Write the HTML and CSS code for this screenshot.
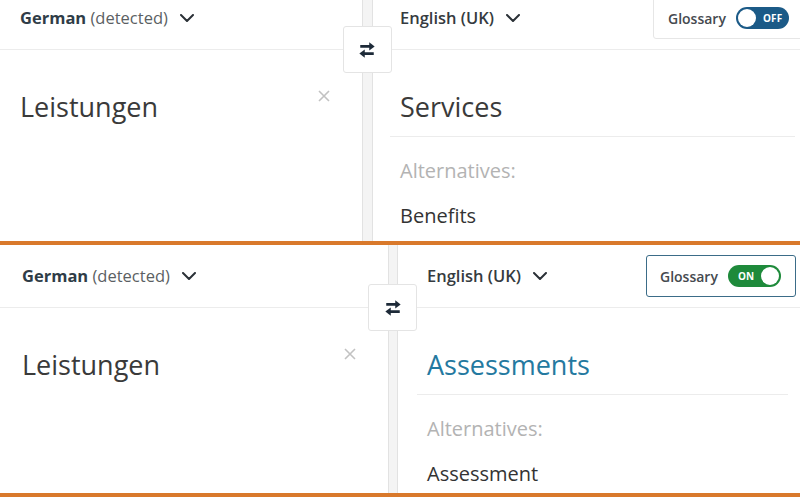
FILE: index.html
```html
<!DOCTYPE html>
<html lang="en">
<head>
<meta charset="utf-8">
<title>Glossary comparison</title>
<link rel="stylesheet" href="styles.css">
</head>
<body>
<div class="shot shot--off">
  <div class="inner">
    <section class="pane pane--src">
      <header class="pane-head">
        <button class="lang"><span class="lang-text"><b class="lang-name">German</b> <span class="lang-note">(detected)</span></span><svg class="chev" viewBox="0 0 14 8"><polyline points="1,1 7,7 13,1"/></svg></button>
      </header>
      <div class="src-body">
        <p class="src-text">Leistungen</p>
        <svg class="clear" viewBox="0 0 12 12"><path d="M1 1L11 11M11 1L1 11"/></svg>
      </div>
    </section>
    <div class="gutter">
      <button class="swap"><svg viewBox="0 0 16 16"><path class="shaft" d="M2 4.8H11M14 11.2H5"/><polygon points="10,1.2 14.8,4.8 10,8.4"/><polygon points="6,7.6 1.2,11.2 6,14.8"/></svg></button>
    </div>
    <section class="pane pane--tgt">
      <header class="pane-head">
        <button class="lang lang--tgt"><span class="lang-text">English (UK)</span><svg class="chev" viewBox="0 0 14 8"><polyline points="1,1 7,7 13,1"/></svg></button>
        <div class="glossary">
          <span class="glossary-label">Glossary</span>
          <span class="toggle"><span class="knob"></span><span class="toggle-text">OFF</span></span>
        </div>
      </header>
      <div class="tgt-body">
        <p class="tgt-main">Services</p>
        <p class="alt-label">Alternatives:</p>
        <p class="alt">Benefits</p>
      </div>
    </section>
  </div>
</div>
<div class="rule"></div>
<div class="shot shot--on">
  <div class="inner">
    <section class="pane pane--src">
      <header class="pane-head">
        <button class="lang"><span class="lang-text"><b class="lang-name">German</b> <span class="lang-note">(detected)</span></span><svg class="chev" viewBox="0 0 14 8"><polyline points="1,1 7,7 13,1"/></svg></button>
      </header>
      <div class="src-body">
        <p class="src-text">Leistungen</p>
        <svg class="clear" viewBox="0 0 12 12"><path d="M1 1L11 11M11 1L1 11"/></svg>
      </div>
    </section>
    <div class="gutter">
      <button class="swap"><svg viewBox="0 0 16 16"><path class="shaft" d="M2 4.8H11M14 11.2H5"/><polygon points="10,1.2 14.8,4.8 10,8.4"/><polygon points="6,7.6 1.2,11.2 6,14.8"/></svg></button>
    </div>
    <section class="pane pane--tgt">
      <header class="pane-head">
        <button class="lang lang--tgt"><span class="lang-text">English (UK)</span><svg class="chev" viewBox="0 0 14 8"><polyline points="1,1 7,7 13,1"/></svg></button>
        <div class="glossary">
          <span class="glossary-label">Glossary</span>
          <span class="toggle"><span class="toggle-text">ON</span><span class="knob"></span></span>
        </div>
      </header>
      <div class="tgt-body">
        <p class="tgt-main tgt-main--glossary">Assessments</p>
        <p class="alt-label">Alternatives:</p>
        <p class="alt">Assessment</p>
      </div>
    </section>
  </div>
</div>
<div class="rule"></div>
</body>
</html>
```

FILE: styles.css
```css
* { box-sizing: border-box; }

html, body {
  margin: 0;
  padding: 0;
  background: #ffffff;
}

body {
  font-family: "Open Sans", "Noto Sans", "Liberation Sans", sans-serif;
  color: #333333;
  width: 800px;
  height: 497px;
  overflow: hidden;
}

p { margin: 0; }

button {
  font: inherit;
  color: inherit;
  background: none;
  border: 0;
  padding: 0;
  margin: 0;
}

/* ---------- frames ---------- */
.shot {
  overflow: hidden;
  background: #fff;
}

.shot--off {
  height: 241px;
  --src-w: 362px;
  --gut-w: 11px;
  --pad-l: 20px;
  --pad-r: 27px;
  --gloss-mr: -3px;
  --gloss-pl: 14px;
  --div-l: 17px;
  --div-r: 5px;
}

.shot--on {
  height: 248px;
  --src-w: 388px;
  --gut-w: 10px;
  --pad-l: 22px;
  --pad-r: 29px;
  --gloss-mr: 4px;
  --gloss-pl: 13px;
  --div-l: 19px;
  --div-r: 12px;
}

.shot--off .inner { margin-top: -13px; }

.inner {
  display: grid;
  grid-template-columns: var(--src-w) var(--gut-w) 1fr;
  height: 261px;
}

.rule {
  height: 4px;
  background: #d9792b;
}

/* ---------- panes ---------- */
.pane { min-width: 0; }

.pane-head {
  height: 63px;
  border-bottom: 1px solid #ececec;
  display: flex;
  align-items: center;
}

.pane--src .pane-head { padding-left: var(--pad-l); }
.pane--tgt .pane-head { padding-left: var(--pad-r); }

.lang {
  display: flex;
  align-items: center;
  font-size: 16.5px;
  line-height: 22px;
  color: #2f3c47;
}

.lang-text { white-space: nowrap; }

.lang-name { font-weight: 700; }
.lang-note { font-weight: 400; color: #5b5f63; }

.lang--tgt { font-weight: 600; color: #353b40; }

.chev {
  width: 14px;
  height: 8px;
  margin-left: 12px;
  fill: none;
  stroke: #2b3137;
  stroke-width: 2;
  stroke-linecap: round;
  stroke-linejoin: round;
}

/* ---------- gutter ---------- */
.gutter {
  position: relative;
  background: #f4f4f4;
  border-left: 1px solid #e2e2e2;
  border-right: 1px solid #e2e2e2;
}

.swap {
  position: absolute;
  top: 39px;
  left: 50%;
  width: 49px;
  height: 47px;
  margin-left: -25px;
  background: #ffffff;
  border: 1px solid #e4e4e4;
  border-radius: 3px;
  display: flex;
  align-items: center;
  justify-content: center;
}

.swap svg {
  width: 18px;
  height: 18px;
}

.swap .shaft {
  stroke: #1d2a38;
  stroke-width: 2.4;
  fill: none;
}

.swap polygon { fill: #1d2a38; }

/* ---------- source ---------- */
.src-body {
  display: flex;
  justify-content: space-between;
  align-items: flex-start;
  padding: 39px 32px 0 var(--pad-l);
}

.src-text {
  font-size: 27px;
  line-height: 36px;
  color: #3a3a3a;
}

.clear {
  width: 12px;
  height: 12px;
  margin-top: 1px;
  fill: none;
  stroke: #c2c2c2;
  stroke-width: 1.6;
}

/* ---------- target ---------- */
.glossary {
  margin-left: auto;
  margin-right: var(--gloss-mr);
  height: 42px;
  width: 150px;
  display: flex;
  align-items: center;
  padding-left: var(--gloss-pl);
  border: 1px solid #e6e6e6;
  border-radius: 3px;
}

.glossary-label {
  font-size: 14px;
  font-weight: 600;
  color: #454a4f;
  margin-right: 10px;
}

.toggle {
  width: 53px;
  height: 22px;
  border-radius: 11px;
  background: #1b5a87;
  display: flex;
  align-items: center;
  padding: 0 2px;
  gap: 7px;
}

.knob {
  width: 18px;
  height: 18px;
  border-radius: 50%;
  background: #ffffff;
  flex: none;
}

.toggle-text {
  font-size: 10px;
  font-weight: 700;
  color: #ffffff;
  letter-spacing: 0.2px;
}

.shot--on .glossary {
  border: 1.5px solid #3b6c88;
}

.shot--on .toggle {
  background: #1e8a3b;
  justify-content: space-between;
  padding: 0 2px 0 10px;
}

.tgt-main {
  margin: 39px var(--div-r) 0 var(--div-l);
  padding: 0 0 11px calc(var(--pad-r) - var(--div-l));
  border-bottom: 1px solid #ececec;
  font-size: 27px;
  line-height: 36px;
  color: #3a3a3a;
}

.tgt-main--glossary { color: #2479a0; }

.alt-label {
  padding: 20px 0 0 var(--pad-r);
  font-size: 20px;
  line-height: 28px;
  color: #b3b3b3;
}

.alt {
  padding: 17px 0 0 var(--pad-r);
  font-size: 20px;
  line-height: 28px;
  color: #333333;
}
```
